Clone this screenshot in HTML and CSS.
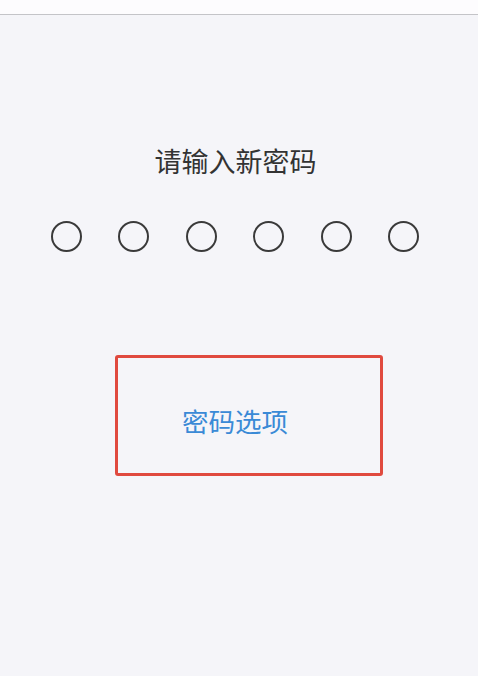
FILE: index.html
```html
<!DOCTYPE html>
<html lang="zh-CN">
<head>
<meta charset="utf-8">
<link rel="stylesheet" href="styles.css">
</head>
<body>
<div class="topbar"></div>
<main class="page">
  <h1 class="title">请输入新密码</h1>
  <div class="dots">
    <span class="dot"></span>
    <span class="dot"></span>
    <span class="dot"></span>
    <span class="dot"></span>
    <span class="dot"></span>
    <span class="dot"></span>
  </div>
  <div class="options-box">
    <span class="options-link">密码选项</span>
  </div>
</main>
</body>
</html>
```
FILE: styles.css
```css
html, body {
  margin: 0;
  padding: 0;
  background: #f5f5f9;
  font-family: "Noto Sans CJK SC", "Noto Sans", sans-serif;
}
.topbar {
  height: 14px;
  background: #fdfcfe;
  border-bottom: 1px solid #c4c4c8;
}
.page {
  display: flex;
  flex-direction: column;
}
.title {
  margin: 132px 7px 0 0;
  font-size: 27px;
  line-height: 27px;
  font-weight: 400;
  color: #333333;
  text-align: center;
}
.dots {
  display: flex;
  gap: 36.4px;
  margin-top: 47px;
  padding-left: 51px;
}
.dot {
  width: 27px;
  height: 27px;
  border: 2px solid #3a3a3a;
  border-radius: 50%;
  flex: none;
}
.options-box {
  margin: 103px 0 0 115px;
  width: 262px;
  height: 115px;
  border: 3px solid #e04a3f;
  border-radius: 3px;
  box-sizing: content-box;
  padding: 0;
  display: flex;
  align-items: flex-start;
}
.options-link {
  margin: 50px 0 0 64px;
  font-size: 26.5px;
  line-height: 26px;
  color: #3a8ad6;
}
```
